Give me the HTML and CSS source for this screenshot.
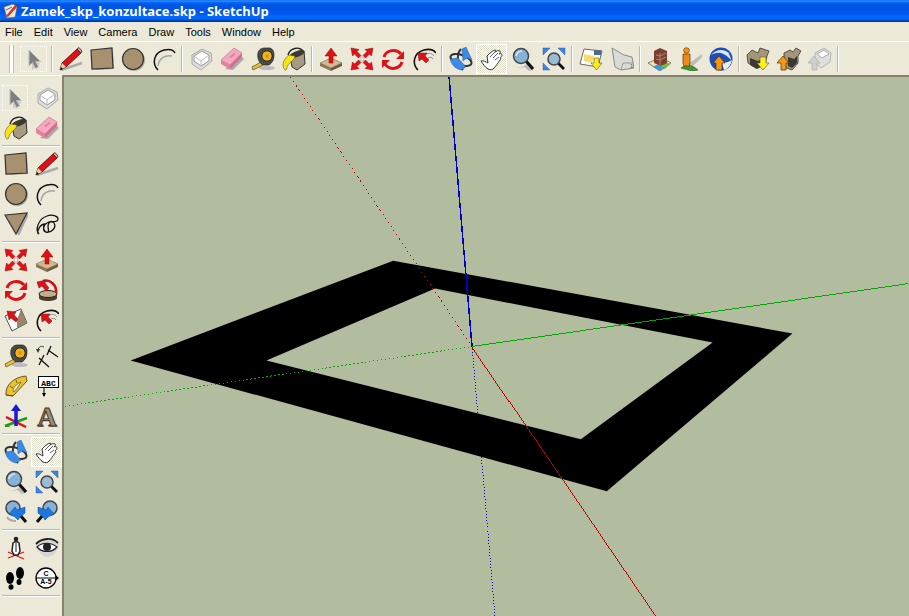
FILE: index.html
```html
<!DOCTYPE html>
<html lang="en">
<head>
    <meta charset="UTF-8">
    <title>Zamek_skp_konzultace.skp - SketchUp</title>
    <link rel="stylesheet" href="styles.css">
</head>
<body>
    <svg class="sprite" xmlns="http://www.w3.org/2000/svg">
        <symbol id="i-select" viewBox="0 0 24 24">
            <path d="M10 7l0 16 8-6z" fill="#ccc"/>
            <path d="M7 3v16l3.500-3.500 3 6 3-1.500-3-5.500h5z" fill="#7f7f7f" stroke="#bbb" stroke-width="1"/>
        </symbol>
        <symbol id="i-pencil" viewBox="0 0 24 24">
            <path d="M2 23l21-7" stroke="#aaa" stroke-width="2.500" fill="none"/>
            <path d="M1 23l2-7L18 2l4 4L7 20z" fill="#e01018" stroke="#3a1010" stroke-width=".8"/>
            <path d="M1 23l2-7 4 4z" fill="#e6d4a8"/>
            <path d="M1 23l1-3 2 2z" fill="#000"/>
            <path d="M18 2l2-1.500 3 3.500-1 2z" fill="#f29ab0" stroke="#222" stroke-width=".8"/>
        </symbol>
        <symbol id="i-rect" viewBox="0 0 24 24">
            <path d="M5 23l19-1-1-17z" fill="#a8a8a0"/>
            <path d="M1 3l21-2 1 20-21 1z" fill="#a8916f" stroke="#333" stroke-width="1.200"/>
        </symbol>
        <symbol id="i-circle" viewBox="0 0 24 24">
            <circle cx="13" cy="13" r="11" fill="#a8a8a0"/>
            <circle cx="12" cy="12" r="10.500" fill="#a8916f" stroke="#333" stroke-width="1.200"/>
        </symbol>
        <symbol id="i-arc" viewBox="0 0 24 24">
            <path d="M6 19C7 11 13 8 20 9" stroke="#a5a5a5" stroke-width="1.500" fill="none"/>
            <path d="M6 23C0 17 1 6 12 3c4-1 9-1 11 3" stroke="#111" stroke-width="1.500" fill="none"/>
        </symbol>
        <symbol id="i-comp" viewBox="0 0 24 24">
            <path d="M3 8l10-6 9 4 1 8-11 9-9-6z" fill="#dedede" stroke="#aaa"/>
            <path d="M5 9l8-5 7 4v6l-8 5-7-5z" fill="#fff" stroke="#999"/>
            <path d="M5 9l7 5 8-6M12 14v5" stroke="#bbb" fill="none"/>
        </symbol>
        <symbol id="i-eraser" viewBox="0 0 24 24">
            <path d="M5 22l8 1 11-11-3-3z" fill="#aaa"/>
            <path d="M1 13L14 1l8 5-12 12z" fill="#f7a8be" stroke="#c06a84" stroke-width=".6"/>
            <path d="M1 13l9 5v4l-9-5z" fill="#e47f9f"/>
            <path d="M10 18L22 6v4L10 22z" fill="#d76d8e"/>
            <path d="M9 10l5-4 2 1-5 4z" fill="#d98aa2"/>
        </symbol>
        <symbol id="i-tape" viewBox="0 0 24 24">
            <ellipse cx="16" cy="21" rx="8" ry="2" fill="#bbb"/>
            <path d="M10 15L1 20l1 3 10-5z" fill="#eec420" stroke="#444" stroke-width=".7"/>
            <path d="M7 6c1-4 4-5 7-5h5c3 1 4 4 4 7 0 5-2 8-5 10h-6c-4-2-6-7-5-12z" fill="#4a4a44" stroke="#222" stroke-width=".7"/>
            <circle cx="16" cy="9" r="5.200" fill="#f0b418" stroke="#222"/>
            <circle cx="16" cy="9" r="2" fill="#d89a10"/>
        </symbol>
        <symbol id="i-paint" viewBox="0 0 24 24">
            <path d="M6 8C8 1 17-1 21 4" stroke="#222" stroke-width="1.400" fill="none"/>
            <path d="M8 9l14-5 1 13-8 6-5-3z" fill="#a89a80" stroke="#333"/>
            <ellipse cx="15" cy="7" rx="8" ry="3" transform="rotate(-20 15 7)" fill="#3a3a30"/>
            <path d="M7 8c-3 2-6 6-6 10 0 3 2 6 3 5s1-4 2-5c1-2 3-3 6-6l1-3z" fill="#f8e410" stroke="#444" stroke-width=".5"/>
        </symbol>
        <symbol id="i-push" viewBox="0 0 24 24">
            <path d="M1 16l11-5 11 5-11 5z" fill="#d2b98f" stroke="#7a6a50" stroke-width=".6"/>
            <path d="M1 16l11 5v3L1 19z" fill="#8a7658"/>
            <path d="M23 16l-11 5v3l11-5z" fill="#6c5a42"/>
            <path d="M12 1l6 8h-4v7h-4V9H6z" fill="#e21010" stroke="#8a0a0a" stroke-width=".5"/>
        </symbol>
        <symbol id="i-move" viewBox="0 0 24 24">
            <g fill="#e81018" stroke="#801010" stroke-width=".5">
                <path d="M1 1l8 1.500-2 2 4 4-2.500 2.500-4-4-2 2z"/>
                <path d="M1 1l8 1.500-2 2 4 4-2.500 2.500-4-4-2 2z" transform="rotate(90 12 12)"/>
                <path d="M1 1l8 1.500-2 2 4 4-2.500 2.500-4-4-2 2z" transform="rotate(180 12 12)"/>
                <path d="M1 1l8 1.500-2 2 4 4-2.500 2.500-4-4-2 2z" transform="rotate(270 12 12)"/>
            </g>
            <circle cx="12" cy="12" r="2" fill="#eee" stroke="#999" stroke-width=".6"/>
        </symbol>
        <symbol id="i-rotate" viewBox="0 0 24 24">
            <path d="M3 10C5 3 15 1 20 7" stroke="#e01018" stroke-width="3" fill="none"/>
            <path d="M23 4v8h-8z" fill="#e01018"/>
            <path d="M21 15c-2 7-12 9-17 2" stroke="#e01018" stroke-width="3" fill="none"/>
            <path d="M1 21v-8h8z" fill="#e01018"/>
        </symbol>
        <symbol id="i-follow" viewBox="0 0 24 24">
            <path d="M6 23C0 17 1 6 12 3c4-1 9-1 12 3" stroke="#111" stroke-width="1.600" fill="none"/>
            <path d="M14 7c3-1 6-1 8 2M16 11c2-1 4-1 5 1" stroke="#888" fill="none"/>
            <path d="M6 6l9 0-2 3 4 4-3 3-4-4-3 2z" fill="#e01018" stroke="#7a1010" stroke-width=".5"/>
        </symbol>
        <symbol id="i-spin" viewBox="0 0 24 24">
            <path d="M4 16c0-3 18-3 18 0v4c0 4-18 4-18 0z" fill="#4a4030"/>
            <ellipse cx="13" cy="16" rx="9" ry="3.500" fill="#c6ae88" stroke="#222"/>
            <path d="M8 3c7-2 14 4 13 12" stroke="#d01018" stroke-width="2.500" fill="none"/>
            <path d="M2 4l9-2-1 3 4 5-3 3-4-5-3 2z" fill="#e01018" stroke="#7a1010" stroke-width=".5"/>
        </symbol>
        <symbol id="i-scale" viewBox="0 0 24 24">
            <path d="M1 8L17 1l6 14-15 8z" fill="#fff" stroke="#555"/>
            <path d="M13 12l4-11 6 14-10 5z" fill="#8e7a5c" opacity=".9"/>
            <path d="M3 3l9 1-2 3 4 4-2 3-5-4-2 2z" fill="#e01018" stroke="#7a1010" stroke-width=".5"/>
        </symbol>
        <symbol id="i-triangle" viewBox="0 0 24 24">
            <path d="M2 4l23-2-10 22z" fill="#aaa"/>
            <path d="M1 3l22-2-11 21z" fill="#a8916f" stroke="#333" stroke-width="1.200"/>
        </symbol>
        <symbol id="i-free" viewBox="0 0 24 24">
            <path d="M4 22C0 18 3 7 12 4c5-2 11 0 11 3 0 4-5 2-9 3-6 2-7 9-3 10 5 1 11-4 8-9-2-3-6-1-6 3 0 3 2 8-2 6-3-1-3-6-1-8-4 0-8 5-7 10" stroke="#111" stroke-width="1.300" fill="none"/>
        </symbol>
        <symbol id="i-dim" viewBox="0 0 24 24">
            <path d="M13 6l10 7M16 2l-4 9M4 14l10 9M9 11l-5 10" stroke="#111" stroke-width="1.300" fill="none"/>
            <path d="M9 3C5 1 3 4 3 7" stroke="#333" fill="none"/>
            <path d="M1 5l4 0-2 4z" fill="#333"/>
        </symbol>
        <symbol id="i-proto" viewBox="0 0 24 24">
            <path d="M2 21C1 11 10 3 22 2l1 5-14 15z" fill="#e9c22c" stroke="#4a3a08" stroke-width=".8"/>
            <path d="M9 17c0-3 3-7 8-9l-3 5-4 5z" fill="#ece9d8" stroke="#4a3a08" stroke-width=".6"/>
            <path d="M2 21l7 1M6 12l3 2M12 6l1 3" stroke="#4a3a08" stroke-width=".7"/>
        </symbol>
        <symbol id="i-abc" viewBox="0 0 24 24">
            <path d="M9 14v8" stroke="#000"/>
            <path d="M7 19l2 4 2-4z" fill="#000"/>
            <rect x="3.500" y="2.500" width="20" height="11" fill="#fff" stroke="#000"/>
            <text x="13.500" y="11.500" class="t-abc">ABC</text>
        </symbol>
        <symbol id="i-axes" viewBox="0 0 24 24">
            <path d="M1 22l22-8" stroke="#18a018" stroke-width="2.500"/>
            <path d="M2 13l20 10" stroke="#e01018" stroke-width="2.500"/>
            <path d="M12 5v17" stroke="#1818d8" stroke-width="3.500"/>
            <path d="M12 0l5 7H7z" fill="#1818d8"/>
            <path d="M3 20l-2 3 5 0z" fill="#18a018"/>
        </symbol>
        <symbol id="i-a3d" viewBox="0 0 24 24">
            <text x="13" y="23" class="t-a3s">A</text>
            <text x="12" y="22" class="t-a3">A</text>
        </symbol>
        <symbol id="i-orbit" viewBox="0 0 24 24">
            <ellipse cx="12" cy="13" rx="11" ry="5" transform="rotate(20 12 13)" fill="none" stroke="#333" stroke-width="2"/>
            <path d="M12 2C8 6 7 16 14 23" stroke="#333" stroke-width="2" fill="none"/>
            <path d="M13 2l4-2 6 13-5-2-4 3z" fill="#3a8ae8" stroke="#1a4a90" stroke-width=".4"/>
            <path d="M1 12l8-1 8 9-5 3c-5-1-9-4-11-11z" fill="#3a8ae8" stroke="#1a4a90" stroke-width=".4"/>
        </symbol>
        <symbol id="i-pan" viewBox="0 0 24 24">
            <path d="M1 14c2-1 5 1 7 2l-1-7c3-3 5-5 8-6 1 0 1 1 0 2 2-1 4-2 5-1 1 1 0 2-1 3 2-1 3 0 3 1 0 1-1 2-2 3 1 0 1 1 0 2-2 3-4 6-6 8-1 2-4 2-6 1-3-2-5-5-7-8z" fill="#fff" stroke="#333" stroke-width="1"/>
            <path d="M10 10l5-5M13 11l5-5M15 13l4-3" stroke="#333" fill="none" stroke-width=".8"/>
        </symbol>
        <symbol id="i-zoom" viewBox="0 0 24 24">
            <path d="M3 19c5 3 12 0 13-3l6 7-4 1-5-4c-3 1-7 1-10-1z" fill="#bbb"/>
            <path d="M15 14l7 8" stroke="#111" stroke-width="3.200"/>
            <circle cx="10" cy="9" r="7.500" fill="#86b2d8" stroke="#444" stroke-width="1.500"/>
            <path d="M5 9c0-3 3-5 6-5" stroke="#d8eaf8" stroke-width="1.500" fill="none"/>
        </symbol>
        <symbol id="i-zoomext" viewBox="0 0 24 24">
            <path d="M15 15l7 7" stroke="#111" stroke-width="2.800"/>
            <circle cx="12" cy="12" r="6" fill="#9abbd8" stroke="#444" stroke-width="1.500"/>
            <path d="M1 1h7L1 8zM23 1h-7l7 7zM1 23v-7l7 7zM1 13" fill="#3a86e8" stroke="#1a4a90" stroke-width=".4"/>
        </symbol>
        <symbol id="i-zprev" viewBox="0 0 24 24">
            <path d="M16 15l6 7" stroke="#111" stroke-width="3"/>
            <circle cx="9" cy="8" r="7" fill="#86b2d8" stroke="#444" stroke-width="1.500"/>
            <path d="M5 14l6-7 2 3 8-3 0 6-5 4-2 3-3-3z" fill="#1c78e0" stroke="#10408a" stroke-width=".5"/>
            <path d="M3 17c2 4 7 4 9 4" stroke="#aaa" stroke-width="2" fill="none"/>
        </symbol>
        <symbol id="i-znext" viewBox="0 0 24 24">
            <path d="M8 15l-6 7" stroke="#111" stroke-width="3"/>
            <circle cx="15" cy="8" r="7" fill="#86b2d8" stroke="#444" stroke-width="1.500"/>
            <path d="M19 14l-6-7-2 3-8-3 0 6 5 4 2 3 3-3z" fill="#1c78e0" stroke="#10408a" stroke-width=".5"/>
        </symbol>
        <symbol id="i-map" viewBox="0 0 24 24">
            <path d="M5 2l18 2-2 8-2 8-18-3z" fill="#fff" stroke="#666"/>
            <path d="M5 7l10 2-2 7-8-2z" fill="#f0dc70"/>
            <path d="M15 3h7v5h-7z" fill="#50688c"/>
            <path d="M15 11h5v5h3l-5.500 7L12 16h3z" fill="#f8ee10" stroke="#555" stroke-width=".6"/>
        </symbol>
        <symbol id="i-section" viewBox="0 0 24 24">
            <path d="M2 1l12 7 8 2 2 11-13 2-6-3z" fill="#d9dcd6" stroke="#8a8a8a"/>
            <path d="M11 23l2-7 10 0" fill="none" stroke="#999"/>
            <text x="20" y="21" class="t-tiny">1</text>
        </symbol>
        <symbol id="i-building" viewBox="0 0 24 24">
            <path d="M1 16L14 10l10 6-11 8z" fill="#f3e2a0" stroke="#555" stroke-width=".7"/>
            <path d="M6 20l7 4 5-4-7-3z" fill="#3a9ad8"/>
            <path d="M14 20l4 2 5-5-4-2z" fill="#6cb84a"/>
            <path d="M7 4l6-3 7 3v12l-6 3-7-3z" fill="#7c4030"/>
            <path d="M13 6l0 13M9 8l4 1 6-3M9 12l4 1 6-3" stroke="#c09080" stroke-width=".8" fill="none"/>
        </symbol>
        <symbol id="i-person" viewBox="0 0 24 24">
            <path d="M10 17L24 7l0 3-9 9z" fill="#aaa" opacity=".7"/>
            <path d="M3 21l6-4 7 3 4 3-6 1z" fill="#3f9a2c" stroke="#205018" stroke-width=".6"/>
            <circle cx="8.500" cy="3.500" r="2.800" fill="#f09a10" stroke="#553008" stroke-width=".6"/>
            <path d="M5 7h7v9l-1 3H6l-1-3z" fill="#f08a10" stroke="#553008" stroke-width=".7"/>
        </symbol>
        <symbol id="i-globe" viewBox="0 0 24 24">
            <circle cx="12" cy="12" r="11.500" fill="#1c4eb8"/>
            <path d="M2 8c6-7 14-6 19-1-5-2-13-2-19 1zM6 5c5-3 10-2 14 2 1 2 2 4 2 6-4-5-10-8-16-8z" fill="#d8e6f8"/>
            <path d="M13 16c3 0 7-1 10-3-1 5-4 9-8 10z" fill="#e6eef8"/>
            <path d="M10 9l6 7h-3v7H7v-7H4z" fill="#f59a10" stroke="#553008" stroke-width=".7"/>
        </symbol>
        <symbol id="i-boxdown" viewBox="0 0 24 24">
            <path d="M1 8l5-5 6 3 2-5 9 3-2 5-2 9-9 3-8-5z" fill="#a69678" stroke="#333" stroke-width=".8"/>
            <path d="M4 11l8 3 6-3-1 8-6 3-7-4z" fill="#3a3a32"/>
            <path d="M14 10h6v6h3l-6 7-6-7h3z" fill="#fdf010" stroke="#555" stroke-width=".6"/>
        </symbol>
        <symbol id="i-boxup" viewBox="0 0 24 24">
            <path d="M7 6l6-3 3 2 3-4 5 3-3 5 0 7-6 7-8-3z" fill="#a69678" stroke="#333" stroke-width=".8"/>
            <path d="M11 10l6 2 3-3v7l-5 5-4-2z" fill="#3a3a32"/>
            <path d="M6 9l6 7H9v7H4v-7H0z" fill="#f59a10" stroke="#553008" stroke-width=".7"/>
        </symbol>
        <symbol id="i-houseup" viewBox="0 0 24 24">
            <path d="M7 6l9-5 7 5-1 9-9 6-6-6z" fill="#dedede" stroke="#b5b5b5"/>
            <path d="M9 7l7-4 5 4-7 4z" fill="#fff" stroke="#aaa"/>
            <path d="M6 9l6 7H9v7H4v-7H0z" fill="#cfcfcf" stroke="#aaa" stroke-width=".7"/>
        </symbol>
        <symbol id="i-walk" viewBox="0 0 24 24">
            <path d="M4 22l16-6M4 16l16 7" stroke="#e01018" stroke-width="1.200"/>
            <circle cx="12" cy="3" r="2.300" fill="#222"/>
            <path d="M9 7l3-2 3 2 1 8-2 4h-4l-2-4z" fill="#fff" stroke="#222" stroke-width="1.500"/>
            <path d="M12 6v10" stroke="#222"/>
        </symbol>
        <symbol id="i-eye" viewBox="0 0 24 24">
            <path d="M1 9c4-7 17-8 23-1-1 8-7 13-12 13S3 16 1 9z" fill="#d5d5d5"/>
            <path d="M2 11c5-5 14-5 20 0-5 6-15 6-20 0z" fill="#fff" stroke="#222" stroke-width="1.200"/>
            <circle cx="12" cy="11" r="4" fill="#222"/>
            <path d="M1 8c6-6 16-7 22-1" stroke="#222" stroke-width="1.800" fill="none"/>
        </symbol>
        <symbol id="i-foot" viewBox="0 0 24 24">
            <ellipse cx="6" cy="12" rx="4" ry="6" fill="#000"/>
            <ellipse cx="7" cy="21" rx="2.500" ry="2.800" fill="#000"/>
            <ellipse cx="16" cy="7" rx="4" ry="6" fill="#000"/>
            <ellipse cx="15" cy="16" rx="2.500" ry="3" fill="#000"/>
        </symbol>
        <symbol id="i-cut" viewBox="0 0 24 24">
            <path d="M18 7l6 5-6 5z" fill="#000"/>
            <circle cx="11" cy="12" r="10" fill="#fff" stroke="#000" stroke-width="1.300"/>
            <path d="M1 12h20" stroke="#000"/>
            <text x="11" y="9.500" class="t-sec">C</text>
            <text x="11" y="18" class="t-sec">A-5</text>
        </symbol>
    </svg>

    <div class="titlebar">
        <svg class="app-icon" viewBox="0 0 16 16">
            <path d="M1 4l9-3 4 3-2 10-8 1z" fill="#f3ead2" stroke="#8a6a3a" stroke-width=".6"/>
            <path d="M3 13L12 2l2 2-9 10z" fill="#d8302a"/>
            <path d="M3 7l6-3" stroke="#3a6ac0"/>
        </svg>
        <span>Zamek_skp_konzultace.skp - SketchUp</span>
    </div>

    <div class="menubar">
        <span>File</span><span>Edit</span><span>View</span><span>Camera</span><span>Draw</span><span>Tools</span><span>Window</span><span>Help</span>
    </div>

    <div class="toolbar">
        <div class="grip"></div>
        <div class="tb-btn first focus"><svg class="ico"><use href="#i-select"/></svg></div>
        <div class="sep first-sep"></div>
        <div class="tb-btn"><svg class="ico"><use href="#i-pencil"/></svg></div>
        <div class="tb-btn"><svg class="ico"><use href="#i-rect"/></svg></div>
        <div class="tb-btn"><svg class="ico"><use href="#i-circle"/></svg></div>
        <div class="tb-btn"><svg class="ico"><use href="#i-arc"/></svg></div>
        <div class="sep"></div>
        <div class="tb-btn"><svg class="ico"><use href="#i-comp"/></svg></div>
        <div class="tb-btn"><svg class="ico"><use href="#i-eraser"/></svg></div>
        <div class="tb-btn"><svg class="ico"><use href="#i-tape"/></svg></div>
        <div class="tb-btn"><svg class="ico"><use href="#i-paint"/></svg></div>
        <div class="sep"></div>
        <div class="tb-btn"><svg class="ico"><use href="#i-push"/></svg></div>
        <div class="tb-btn"><svg class="ico"><use href="#i-move"/></svg></div>
        <div class="tb-btn"><svg class="ico"><use href="#i-rotate"/></svg></div>
        <div class="tb-btn"><svg class="ico"><use href="#i-follow"/></svg></div>
        <div class="sep"></div>
        <div class="tb-btn"><svg class="ico"><use href="#i-orbit"/></svg></div>
        <div class="tb-btn active"><svg class="ico"><use href="#i-pan"/></svg></div>
        <div class="tb-btn"><svg class="ico"><use href="#i-zoom"/></svg></div>
        <div class="tb-btn"><svg class="ico"><use href="#i-zoomext"/></svg></div>
        <div class="sep"></div>
        <div class="tb-btn"><svg class="ico"><use href="#i-map"/></svg></div>
        <div class="tb-btn"><svg class="ico"><use href="#i-section"/></svg></div>
        <div class="sep"></div>
        <div class="tb-btn"><svg class="ico"><use href="#i-building"/></svg></div>
        <div class="tb-btn"><svg class="ico"><use href="#i-person"/></svg></div>
        <div class="tb-btn"><svg class="ico"><use href="#i-globe"/></svg></div>
        <div class="sep"></div>
        <div class="tb-btn"><svg class="ico"><use href="#i-boxdown"/></svg></div>
        <div class="tb-btn"><svg class="ico"><use href="#i-boxup"/></svg></div>
        <div class="tb-btn"><svg class="ico"><use href="#i-houseup"/></svg></div>
        <div class="sep"></div>
    </div>

    <div class="main">
        <div class="sidebar">
            <div class="side-group">
                <div class="side-btn focus"><svg class="ico"><use href="#i-select"/></svg></div>
                <div class="side-btn"><svg class="ico"><use href="#i-comp"/></svg></div>
                <div class="side-btn"><svg class="ico"><use href="#i-paint"/></svg></div>
                <div class="side-btn"><svg class="ico"><use href="#i-eraser"/></svg></div>
            </div>
            <div class="side-sep"></div>
            <div class="side-group">
                <div class="side-btn"><svg class="ico"><use href="#i-rect"/></svg></div>
                <div class="side-btn"><svg class="ico"><use href="#i-pencil"/></svg></div>
                <div class="side-btn"><svg class="ico"><use href="#i-circle"/></svg></div>
                <div class="side-btn"><svg class="ico"><use href="#i-arc"/></svg></div>
                <div class="side-btn"><svg class="ico"><use href="#i-triangle"/></svg></div>
                <div class="side-btn"><svg class="ico"><use href="#i-free"/></svg></div>
            </div>
            <div class="side-sep"></div>
            <div class="side-group">
                <div class="side-btn"><svg class="ico"><use href="#i-move"/></svg></div>
                <div class="side-btn"><svg class="ico"><use href="#i-push"/></svg></div>
                <div class="side-btn"><svg class="ico"><use href="#i-rotate"/></svg></div>
                <div class="side-btn"><svg class="ico"><use href="#i-spin"/></svg></div>
                <div class="side-btn"><svg class="ico"><use href="#i-scale"/></svg></div>
                <div class="side-btn"><svg class="ico"><use href="#i-follow"/></svg></div>
            </div>
            <div class="side-sep"></div>
            <div class="side-group">
                <div class="side-btn"><svg class="ico"><use href="#i-tape"/></svg></div>
                <div class="side-btn"><svg class="ico"><use href="#i-dim"/></svg></div>
                <div class="side-btn"><svg class="ico"><use href="#i-proto"/></svg></div>
                <div class="side-btn"><svg class="ico"><use href="#i-abc"/></svg></div>
                <div class="side-btn"><svg class="ico"><use href="#i-axes"/></svg></div>
                <div class="side-btn"><svg class="ico"><use href="#i-a3d"/></svg></div>
            </div>
            <div class="side-sep"></div>
            <div class="side-group">
                <div class="side-btn"><svg class="ico"><use href="#i-orbit"/></svg></div>
                <div class="side-btn active"><svg class="ico"><use href="#i-pan"/></svg></div>
                <div class="side-btn"><svg class="ico"><use href="#i-zoom"/></svg></div>
                <div class="side-btn"><svg class="ico"><use href="#i-zoomext"/></svg></div>
                <div class="side-btn"><svg class="ico"><use href="#i-zprev"/></svg></div>
                <div class="side-btn"><svg class="ico"><use href="#i-znext"/></svg></div>
            </div>
            <div class="side-sep"></div>
            <div class="side-group">
                <div class="side-btn"><svg class="ico"><use href="#i-walk"/></svg></div>
                <div class="side-btn"><svg class="ico"><use href="#i-eye"/></svg></div>
                <div class="side-btn"><svg class="ico"><use href="#i-foot"/></svg></div>
                <div class="side-btn"><svg class="ico"><use href="#i-cut"/></svg></div>
            </div>
            <div class="side-sep"></div>
        </div>

        <div class="canvas">
            <!-- viewBox keeps the numbers in window coordinates -->
            <svg class="scene" viewBox="64 76 845 540">
                <path class="axis-blue dots" d="M472 346L495 616"/>
                <path class="face" fill-rule="evenodd" d="M393 260L793 333 607 491 130 360ZM435 288L266 360 581 439 713 342Z"/>
                <path class="axis-red dots" d="M290 76L472 346"/>
                <path class="axis-green dots" d="M64 406L472 346"/>
                <path class="axis-red" d="M472 346L656 616"/>
                <path class="axis-green" d="M472 346L909 283"/>
                <path class="axis-blue solid" d="M449 76L472 346"/>
            </svg>
        </div>
    </div>
</body>
</html>
```

FILE: styles.css
```css
html, body {
    margin: 0;
    padding: 0;
    height: 100%;
    overflow: hidden;
}
body {
    background-color: #ece9d8;
    font-family: 'Noto Sans', 'Open Sans', sans-serif;
    display: flex;
    flex-direction: column;
}
.sprite {
    display: none;
}
.titlebar {
    height: 22px;
    flex: none;
    display: flex;
    align-items: center;
    padding-left: 3px;
    gap: 2px;
    color: #fff;
    font-size: 13px;
    font-weight: bold;
    background: linear-gradient(#0058ee 0%, #3593ff 4%, #288eff 6%, #127dff 8%, #036ffc 10%, #0262ee 14%, #0057e5 20%, #0054e3 24%, #0055eb 56%, #005bf5 66%, #026afe 76%, #0062ef 86%, #0052d6 92%, #0040ab 94%, #003092 100%);
}
.app-icon {
    width: 16px;
    height: 16px;
}
.menubar {
    height: 19px;
    flex: none;
    display: flex;
    align-items: center;
    padding-left: 5px;
    gap: 11px;
    font-family: 'Liberation Sans', sans-serif;
    font-size: 11px;
    color: #000;
}
.toolbar {
    height: 33px;
    flex: none;
    display: flex;
    align-items: center;
    border-top: 1px solid #fff;
}
.grip {
    width: 3px;
    height: 28px;
    margin-left: 9px;
    border-left: 1px solid #c4c0ae;
    border-right: 1px solid #c4c0ae;
    background-color: #fff;
}
.tb-btn {
    width: 31px;
    height: 30px;
    flex: none;
    display: flex;
    align-items: center;
    justify-content: center;
    box-sizing: border-box;
}
.tb-btn.first {
    width: 27px;
    height: 26px;
    margin-left: 6px;
}
.sep {
    width: 2px;
    height: 26px;
    flex: none;
    margin: 0 2px;
    background-color: #bdb9a8;
    border-right: 1px solid #fff;
    box-sizing: border-box;
}
.sep.first-sep {
    margin: 0 2px 0 4px;
}
.ico {
    width: 24px;
    height: 24px;
    display: block;
}
.focus {
    border: 1px dotted #fff;
}
.active {
    background: repeating-conic-gradient(#fff 0 25%, #e2dfcd 0 50%) 0 0 / 2px 2px;
    border: 1px solid #fff;
}
.main {
    flex: 1;
    display: flex;
    min-height: 0;
}
.sidebar {
    width: 62px;
    flex: none;
    box-sizing: border-box;
    padding-top: 7px;
    border-top: 1px solid #fff;
}
.side-group {
    display: grid;
    grid-template-columns: 31px 31px;
    grid-auto-rows: 30px;
}
.side-btn {
    display: flex;
    align-items: center;
    justify-content: center;
    box-sizing: border-box;
}
.side-btn.focus {
    width: 26px;
    height: 26px;
    margin: 2px 0 0 2px;
}
.side-sep {
    height: 2px;
    margin: 2px 2px;
    background-color: #bdb9a8;
    border-bottom: 1px solid #fff;
    box-sizing: border-box;
}
.canvas {
    flex: 1;
    min-width: 0;
    box-sizing: border-box;
    background-color: #b2bc9f;
    border-top: 2px solid #85826f;
    border-left: 2px solid #85826f;
}
.scene {
    display: block;
    width: 100%;
    height: 100%;
}
.face {
    fill: #000;
}
.scene path:not(.face) {
    fill: none;
    shape-rendering: crispEdges;
    stroke-width: 1;
}
.axis-red {
    stroke: #c00000;
}
.axis-green {
    stroke: #00a800;
}
.axis-blue {
    stroke: #0000c8;
}
.scene .axis-blue.solid {
    stroke-width: 1.500;
}
.dots {
    stroke-dasharray: 1.500 3.500;
}
.axis-green.dots {
    stroke-dasharray: 1.500 2.500;
}
.axis-blue.dots {
    stroke-dasharray: 1 2;
}
.t-abc {
    font-family: 'Liberation Mono', monospace;
    font-size: 8px;
    font-weight: bold;
    text-anchor: middle;
}
.t-sec {
    font-family: 'Liberation Sans', sans-serif;
    font-size: 7px;
    font-weight: bold;
    text-anchor: middle;
}
.t-tiny {
    font-family: 'Liberation Sans', sans-serif;
    font-size: 6px;
    fill: #555;
}
.t-a3 {
    font-family: 'Liberation Serif', serif;
    font-size: 27px;
    font-weight: bold;
    text-anchor: middle;
    fill: #a08a68;
    stroke: #3a3020;
    stroke-width: .8;
}
.t-a3s {
    font-family: 'Liberation Serif', serif;
    font-size: 27px;
    font-weight: bold;
    text-anchor: middle;
    fill: #888;
}
```
